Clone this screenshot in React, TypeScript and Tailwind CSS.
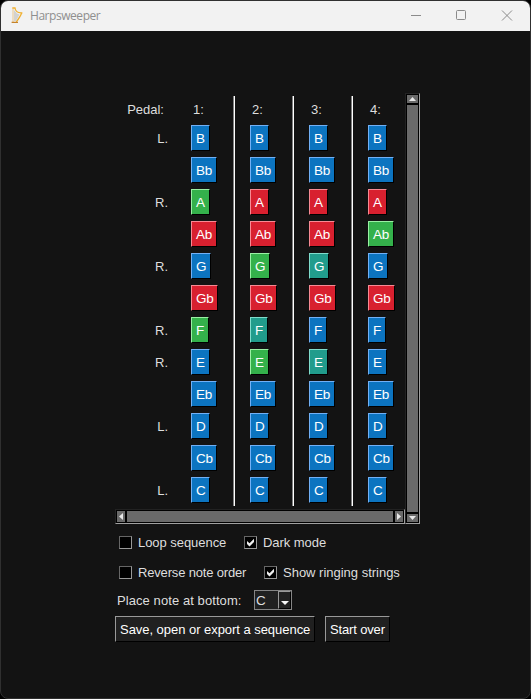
import React from "react";

type Tone = "b" | "r" | "g" | "t";

const TONES: Record<Tone, string> = {
  b: "bg-[#0c74c0] border-t-[#72b0f5] border-l-[#72b0f5]",
  r: "bg-[#d8202f] border-t-[#f78a94] border-l-[#f78a94]",
  g: "bg-[#34b14b] border-t-[#9af0a4] border-l-[#9af0a4]",
  t: "bg-[#219c8c] border-t-[#80dccc] border-l-[#80dccc]",
};

const WIDTHS: Record<string, string> = {
  F: "w-[18px]",
  G: "w-5",
  Gb: "w-[27px]",
};

const ROWS: { note: string; side: string; tones: Tone[] }[] = [
  { note: "B", side: "L.", tones: ["b", "b", "b", "b"] },
  { note: "Bb", side: "", tones: ["b", "b", "b", "b"] },
  { note: "A", side: "R.", tones: ["g", "r", "r", "r"] },
  { note: "Ab", side: "", tones: ["r", "r", "r", "g"] },
  { note: "G", side: "R.", tones: ["b", "g", "t", "b"] },
  { note: "Gb", side: "", tones: ["r", "r", "r", "r"] },
  { note: "F", side: "R.", tones: ["g", "t", "b", "b"] },
  { note: "E", side: "R.", tones: ["b", "g", "t", "b"] },
  { note: "Eb", side: "", tones: ["b", "b", "b", "b"] },
  { note: "D", side: "L.", tones: ["b", "b", "b", "b"] },
  { note: "Cb", side: "", tones: ["b", "b", "b", "b"] },
  { note: "C", side: "L.", tones: ["b", "b", "b", "b"] },
];

function NoteButton({ note, tone }: { note: string; tone: Tone }) {
  const width = WIDTHS[note] ?? (note.length > 1 ? "w-[26px]" : "w-[19px]");
  return (
    <button
      className={`mb-1.5 flex h-[26px] shrink-0 items-center border border-r-black border-b-black pt-0.5 pl-1 text-[13.5px] tracking-[-0.2px] text-white ${width} ${TONES[tone]}`}
    >
      {note}
    </button>
  );
}

function Arrow({ w, h, points }: { w: number; h: number; points: string }) {
  return (
    <svg width={w} height={h} viewBox={`0 0 ${w} ${h}`} className="shrink-0">
      <polygon points={points} fill="#e8e8e8" />
    </svg>
  );
}

function Check({ label, spacing, checked }: { label: string; spacing: string; checked?: boolean }) {
  return (
    <label className="flex h-[19px] items-center">
      <span className="mr-1.5 flex size-[13px] shrink-0 border border-t-[#666] border-r-[#999] border-b-[#999] border-l-[#666] bg-black">
        {checked && (
          <svg width="11" height="11" viewBox="0 0 11 11">
            <path d="M2 4 L4.5 6.3 L9 1.8 V5 L4.5 9.5 L2 7 Z" fill="#eee" />
          </svg>
        )}
      </span>
      <span className={`pt-px whitespace-nowrap ${spacing}`}>{label}</span>
    </label>
  );
}

function Harp() {
  return (
    <svg width="14" height="18" viewBox="0 0 14 18" fill="none">
      <path d="M4 3 L7 6.5 L9.5 7.5 L6 14 H4 Z" fill="#d2d2d0" />
      <path d="M3 1.5 V15" stroke="#e6c184" strokeWidth="0.9" />
      <path d="M2.3 1 H5 C5.5 4.5 7.5 6.3 12.4 5.8" stroke="#f0b030" strokeWidth="1.3" />
      <path d="M11.6 6 C10.7 9 8.5 12 6.3 14.8" stroke="#f0b030" strokeWidth="1.3" />
      <path d="M1.6 15.4 H8" stroke="#c5832a" strokeWidth="1.3" />
    </svg>
  );
}

export default function App() {
  return (
    <div className="h-[699px] w-[531px] bg-black">
      <div className="flex h-full flex-col overflow-hidden rounded-lg border border-[#303030] bg-[#131313] font-['Liberation_Sans',Arial,sans-serif] text-[13px] leading-4 text-[#dedede]">
        <header className="flex h-[30px] shrink-0 items-center bg-[#f2f2f2] pl-[9px] text-[#8f8f8f]">
          <Harp />
          <span className="ml-1.5 font-['Open_Sans',sans-serif] text-[12px] tracking-[-0.45px]">Harpsweeper</span>
          <svg width="104" height="12" viewBox="0 0 104 12" className="mr-[17px] ml-auto" fill="none" stroke="#8b8b8b">
            <path d="M2 5.5 H12" />
            <rect x="47.5" y="0.5" width="9" height="9" rx="1" />
            <path d="M93 0.5 L103 10.5 M103 0.5 L93 10.5" />
          </svg>
        </header>

        <main className="ml-[114px] flex flex-col pt-[62px]">
          <section className="flex h-[431px]">
            <div className="flex w-[290px] flex-col">
              <div className="mt-[3px] mb-[3px] flex h-[410px]">
                <div className="mr-[23px] flex w-[53px] shrink-0 flex-col items-end">
                  <div className="mr-1 flex h-[29px] shrink-0 items-center pb-px whitespace-nowrap">Pedal:</div>
                  {ROWS.map((row) => (
                    <div key={row.note} className="flex h-8 shrink-0 items-center pb-1">
                      {row.side}
                    </div>
                  ))}
                </div>
                {[0, 1, 2, 3].map((col) => (
                  <div key={col} className="flex shrink-0">
                    <div className="flex w-[42px] shrink-0 flex-col">
                      <div className="flex h-[29px] shrink-0 items-center pb-px pl-0.5">{`${col + 1}:`}</div>
                      {ROWS.map((row) => (
                        <NoteButton key={row.note} note={row.note} tone={row.tones[col]} />
                      ))}
                    </div>
                    {col < 3 && <div className="mr-[15px] h-[410px] w-0.5 shrink-0 border-l border-[#808080] bg-white" />}
                  </div>
                ))}
              </div>
              <div className="flex h-[15px] shrink-0 border border-t-[#222] border-r-[#a0a0a0] border-b-[#a0a0a0] border-l-[#222]">
                <div className="flex w-full border border-black bg-[#6a6a6a]">
                  <Arrow w={8} h={11} points="6,2 6,9 2,5.5" />
                  <div className="grow border-x-2 border-black" />
                  <Arrow w={8} h={11} points="2,2 2,9 6,5.5" />
                </div>
              </div>
            </div>
            <div className="flex w-[15px] border border-t-[#222] border-r-[#a0a0a0] border-b-[#a0a0a0] border-l-[#222]">
              <div className="flex w-full flex-col border border-black bg-[#6a6a6a]">
                <Arrow w={11} h={8} points="2,6 9,6 5.5,2" />
                <div className="grow border-y-2 border-black" />
                <Arrow w={11} h={8} points="2,2 9,2 5.5,6" />
              </div>
            </div>
          </section>

          <div className="mt-[9px] ml-1 flex">
            <div className="w-[125px]">
              <Check label="Loop sequence" spacing="tracking-[-0.05px]" />
            </div>
            <Check label="Dark mode" spacing="tracking-[-0.05px]" checked />
          </div>
          <div className="mt-[11px] ml-1 flex">
            <div className="w-[145px]">
              <Check label="Reverse note order" spacing="tracking-[-0.17px]" />
            </div>
            <Check label="Show ringing strings" spacing="tracking-[-0.01px]" checked />
          </div>
          <div className="mt-2 ml-0.5 flex h-5 items-center">
            <span className="w-[137px] pt-0.5 tracking-[0.08px] whitespace-nowrap">Place note at bottom:</span>
            <div className="flex h-5 w-[38px] border border-[#858585] bg-[#202020]">
              <span className="flex grow items-center pt-0.5 pl-px text-[13.5px]">C</span>
              <div className="flex w-[13px] shrink-0 items-end justify-center border border-t-[#999] border-r-black border-b-black border-l-[#999] pb-[3px]">
                <svg width="8" height="4" viewBox="0 0 8 4" className="shrink-0">
                  <polygon points="0,0 8,0 4,4" fill="#f5f5f5" />
                </svg>
              </div>
            </div>
          </div>
          <div className="mt-1.5 flex gap-2.5">
            <button className="flex h-[26px] w-[200px] items-center border border-t-[#999] border-r-black border-b-black border-l-[#999] bg-[#202020] pt-0.5 pl-1 tracking-[-0.04px] whitespace-nowrap text-white">
              Save, open or export a sequence
            </button>
            <button className="flex h-[26px] w-[65px] items-center border border-t-[#999] border-r-black border-b-black border-l-[#999] bg-[#202020] pt-0.5 pl-1 tracking-[-0.15px] whitespace-nowrap text-white">
              Start over
            </button>
          </div>
        </main>
      </div>
    </div>
  );
}
